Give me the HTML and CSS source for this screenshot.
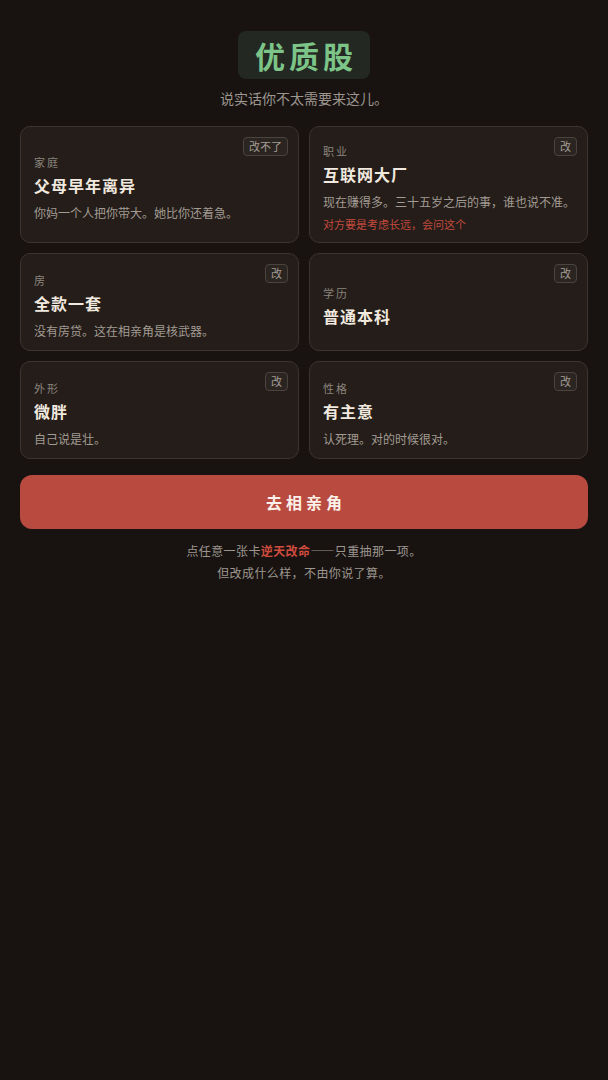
FILE: index.html
```html
<!DOCTYPE html>
<html lang="zh-CN">
<head>
    <meta charset="UTF-8">
    <meta name="viewport" content="width=device-width, initial-scale=1.0">
    <title>优质股</title>
    <link rel="stylesheet" href="styles.css">
</head>
<body>
    <div class="page">
        <header class="head">
            <h1 class="badge-title">优质股</h1>
            <p class="sub">说实话你不太需要来这儿。</p>
        </header>

        <div class="grid">
            <div class="card">
                <span class="tag">改不了</span>
                <div class="label">家庭</div>
                <div class="value">父母早年离异</div>
                <div class="desc">你妈一个人把你带大。她比你还着急。</div>
            </div>
            <div class="card">
                <span class="tag">改</span>
                <div class="label">职业</div>
                <div class="value">互联网大厂</div>
                <div class="desc">现在赚得多。三十五岁之后的事，谁也说不准。</div>
                <div class="note">对方要是考虑长远，会问这个</div>
            </div>
            <div class="card">
                <span class="tag">改</span>
                <div class="label">房</div>
                <div class="value">全款一套</div>
                <div class="desc">没有房贷。这在相亲角是核武器。</div>
            </div>
            <div class="card">
                <span class="tag">改</span>
                <div class="label">学历</div>
                <div class="value">普通本科</div>
            </div>
            <div class="card">
                <span class="tag">改</span>
                <div class="label">外形</div>
                <div class="value">微胖</div>
                <div class="desc">自己说是壮。</div>
            </div>
            <div class="card">
                <span class="tag">改</span>
                <div class="label">性格</div>
                <div class="value">有主意</div>
                <div class="desc">认死理。对的时候很对。</div>
            </div>
        </div>

        <button class="go">去相亲角</button>

        <p class="hint">点任意一张卡<strong>逆天改命</strong>——只重抽那一项。<br>但改成什么样，不由你说了算。</p>
    </div>
</body>
</html>
```

FILE: styles.css
```css
* {
    box-sizing: border-box;
}
html, body {
    margin: 0;
    padding: 0;
    background: #181311;
    min-height: 100%;
}
body {
    font-family: "Noto Sans CJK SC", "Noto Sans", sans-serif;
    color: #e9e1d8;
}
.page {
    padding: 31px 20px 40px;
}
.head {
    text-align: center;
}
.badge-title {
    display: inline-block;
    margin: 0;
    padding: 0 13px;
    height: 48px;
    line-height: 48px;
    font-size: 30px;
    font-weight: 700;
    letter-spacing: 4px;
    text-indent: 4px;
    color: #7cc487;
    background: #232822;
    border-radius: 8px;
}
.sub {
    margin: 8px 0 0;
    font-size: 14px;
    line-height: 22px;
    color: #9d968f;
}
.grid {
    margin-top: 17px;
    display: grid;
    grid-template-columns: 1fr 1fr;
    gap: 10px;
}
.card {
    position: relative;
    display: flex;
    flex-direction: column;
    justify-content: center;
    min-height: 98px;
    padding: 15px 8px 9px 13px;
    background: #241d19;
    border: 1px solid #3b3430;
    border-radius: 10px;
}
.tag {
    position: absolute;
    top: 10px;
    right: 10px;
    padding: 0 5px;
    height: 19px;
    line-height: 17px;
    font-size: 11px;
    color: #a49d95;
    background: #2b2521;
    border: 1px solid #4a433e;
    border-radius: 4px;
}
.label {
    font-size: 11px;
    line-height: 18px;
    letter-spacing: 2px;
    color: #8b847d;
}
.value {
    margin-top: 3px;
    font-size: 16px;
    line-height: 22px;
    font-weight: 700;
    letter-spacing: 1px;
    color: #f1e9df;
}
.desc {
    margin-top: 8px;
    font-size: 12px;
    line-height: 18px;
    color: #a29b93;
    white-space: nowrap;
}
.note {
    margin-top: 5px;
    font-size: 11px;
    line-height: 17px;
    color: #c24a3e;
}
.go {
    display: block;
    width: 100%;
    margin-top: 16px;
    height: 54px;
    border: none;
    border-radius: 12px;
    background: #b94a3f;
    color: #fbf1ea;
    font-family: inherit;
    font-size: 16px;
    font-weight: 700;
    letter-spacing: 4px;
    text-indent: 4px;
}
.hint {
    margin: 11px 0 0;
    text-align: center;
    font-size: 12px;
    line-height: 22px;
    letter-spacing: 0.4px;
    color: #9d968f;
}
.hint strong {
    color: #d04c3e;
    font-weight: 700;
}
```
